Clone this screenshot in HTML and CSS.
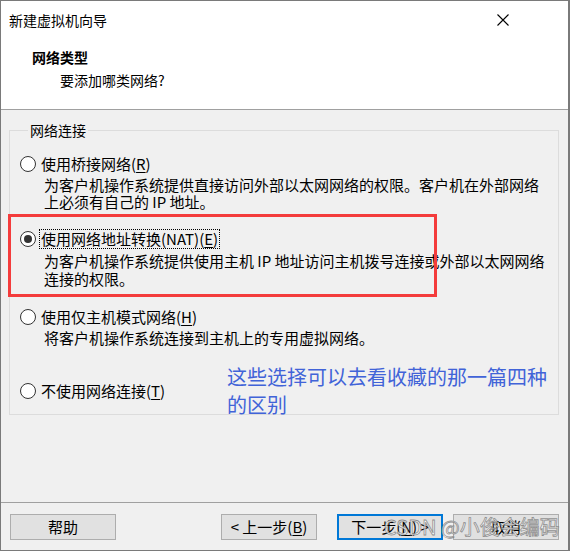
FILE: index.html
```html
<!DOCTYPE html>
<html lang="zh-CN">
<head>
<meta charset="utf-8">
<title>新建虚拟机向导</title>
<link rel="stylesheet" href="styles.css">
</head>
<body>
<div class="window">
  <div class="header">
    <div class="titlebar">
      <span class="title">新建虚拟机向导</span>
      <span class="close">
        <svg width="12" height="12" viewBox="0 0 12 12"><path d="M0.5 0.5 L11.5 11.5 M11.5 0.5 L0.5 11.5" stroke="#000" stroke-width="1.1" fill="none"/></svg>
      </span>
    </div>
    <div class="heading">网络类型</div>
    <div class="subheading">要添加哪类网络?</div>
  </div>
  <div class="main">
    <div class="group">
      <div class="legend">网络连接</div>
      <div class="option first">
        <div class="opt-head"><span class="radio"></span><span class="label">使用桥接网络(<u>R</u>)</span></div>
        <div class="desc">为客户机操作系统提供直接访问外部以太网网络的权限。客户机在外部网络<br>上必须有自己的 IP 地址。</div>
      </div>
      <div class="option second">
        <div class="opt-head"><span class="radio checked"></span><span class="label focus">使用网络地址转换(NAT)(<u>E</u>)</span></div>
        <div class="desc">为客户机操作系统提供使用主机 IP 地址访问主机拨号连接或外部以太网网络<br>连接的权限。</div>
      </div>
      <div class="option third">
        <div class="opt-head"><span class="radio"></span><span class="label">使用仅主机模式网络(<u>H</u>)</span></div>
        <div class="desc">将客户机操作系统连接到主机上的专用虚拟网络。</div>
      </div>
      <div class="option fourth">
        <div class="opt-head"><span class="radio"></span><span class="label">不使用网络连接(<u>T</u>)</span></div>
      </div>
      <div class="highlight"></div>
      <div class="note">这些选择可以去看收藏的那一篇四种<br>的区别</div>
    </div>
  </div>
  <div class="footer">
    <button class="btn">帮助</button>
    <div class="nav">
      <button class="btn back">&lt; 上一步(<u>B</u>)</button>
      <button class="btn default">下一步(<u>N</u>) &gt;</button>
      <button class="btn">取消</button>
    </div>
    <div class="watermark">CSDN @小俊会编码</div>
  </div>
</div>
</body>
</html>
```

FILE: styles.css
```css
html, body {
  margin: 0;
  padding: 0;
  background: #f0f0f0;
}
body {
  font-family: "Noto Sans CJK SC", "Noto Sans", sans-serif;
  color: #000;
}
.window {
  width: 570px;
  height: 551px;
  box-sizing: border-box;
  border: 1px solid #7a7a7a;
  border-right-width: 2px;
  display: flex;
  flex-direction: column;
  background: #f0f0f0;
}
.header {
  background: #fff;
  height: 108px;
  flex: none;
  border-bottom: 1px solid #a0a0a0;
}
.titlebar {
  height: 38px;
  display: flex;
  align-items: center;
  justify-content: space-between;
  padding-left: 8px;
  padding-right: 59px;
}
.title {
  font-size: 14px;
  line-height: 20px;
}
.close {
  width: 12px;
  height: 12px;
  display: block;
}
.close svg { display: block; }
.heading {
  font-size: 14px;
  font-weight: bold;
  line-height: 20px;
  margin-top: 8px;
  padding-left: 31px;
}
.subheading {
  font-size: 14px;
  line-height: 20px;
  margin-top: 3px;
  padding-left: 59px;
}
.main {
  flex: 1;
  padding-top: 20px;
  font-size: 15px;
}
.group {
  position: relative;
  margin: 0 9px 0 8px;
  border: 1px solid #dcdcdc;
  padding: 0 9px 13px 10px;
}
.legend {
  width: max-content;
  margin: -10px 0 0 8px;
  padding: 0 2px;
  background: #f0f0f0;
  line-height: 18px;
  font-size: 14px;
}
.option.first { margin-top: 15px; }
.option.second { margin-top: 19px; }
.option.third { margin-top: 19px; }
.option.fourth { margin-top: 35px; }
.opt-head {
  display: flex;
  align-items: center;
  height: 20px;
}
.radio {
  width: 16px;
  height: 16px;
  box-sizing: border-box;
  border: 1px solid #333;
  border-radius: 50%;
  background: #fff;
  margin-right: 3px;
  display: flex;
  align-items: center;
  justify-content: center;
  flex: none;
}
.radio.checked::after {
  content: "";
  width: 8px;
  height: 8px;
  border-radius: 50%;
  background: #333;
}
.label {
  padding: 0 2px;
  line-height: 20px;
}
.label.focus {
  outline: 1px dotted #000;
  outline-offset: -1px;
}
.desc {
  margin-left: 24px;
  margin-top: 2px;
  line-height: 17px;
}
.second .desc { margin-top: 3px; line-height: 18px; }
u { text-decoration: underline; text-underline-offset: 2px; }
.highlight {
  position: absolute;
  left: -2px;
  top: 83px;
  width: 429px;
  height: 83px;
  box-sizing: border-box;
  border: 3px solid #f43c3c;
}
.note {
  position: absolute;
  left: 217px;
  top: 232px;
  font-size: 20px;
  line-height: 28px;
  color: #4163d8;
  white-space: nowrap;
}
.footer {
  position: relative;
  flex: none;
  height: 48px;
  box-sizing: border-box;
  border-top: 1px solid #a0a0a0;
  padding: 11px 9px 0 9px;
  display: flex;
  justify-content: space-between;
  align-items: flex-start;
}
.nav {
  display: flex;
  gap: 10px;
}
.btn {
  width: 106px;
  height: 26px;
  box-sizing: border-box;
  border: 1px solid #adadad;
  background: #e1e1e1;
  font-family: "Noto Sans CJK SC", "Noto Sans", sans-serif;
  font-size: 15px;
  line-height: 22px;
  padding: 0;
  color: #000;
}
.btn.back {
  width: 96px;
  margin-right: 10px;
}
.btn.default {
  border: 2px solid #0078d7;
}
.watermark {
  position: absolute;
  left: 383px;
  top: 10px;
  font-size: 20px;
  line-height: 28px;
  color: rgba(255, 255, 255, 0.75);
  -webkit-text-stroke: 0.8px rgba(110, 110, 110, 0.75);
  white-space: nowrap;
  pointer-events: none;
}
```
